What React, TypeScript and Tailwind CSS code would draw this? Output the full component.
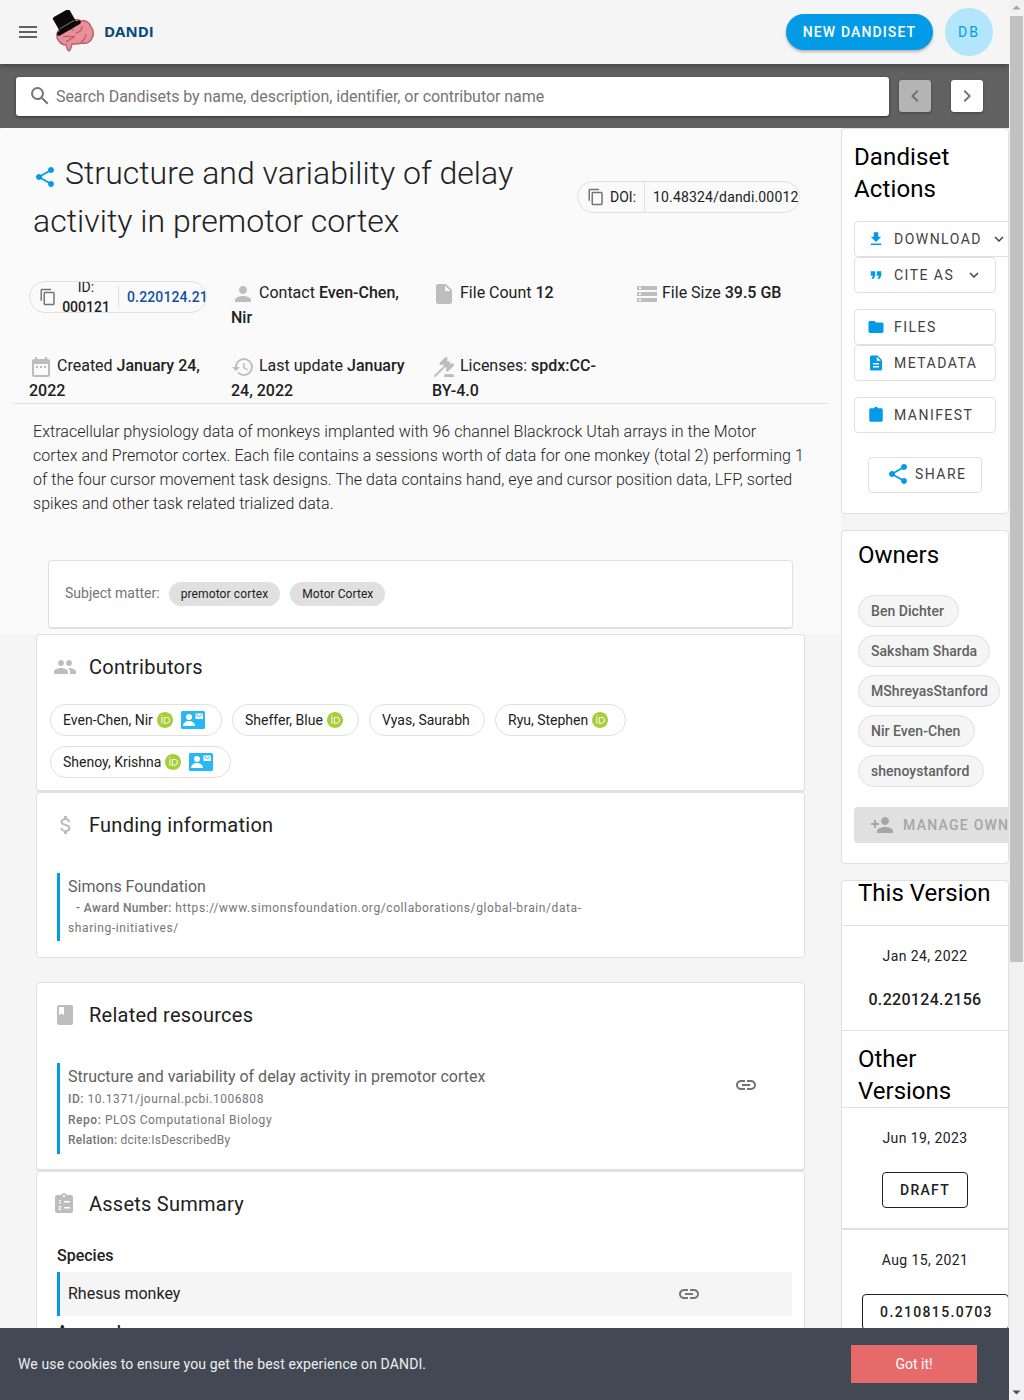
import React from "react";
import {
  MdMenu, MdSearch, MdChevronLeft, MdChevronRight, MdShare, MdContentCopy, MdPerson, MdInsertDriveFile,
  MdStorage, MdDateRange, MdHistory, MdFileDownload, MdFormatQuote, MdFolder, MdDescription,
  MdPeople, MdAttachMoney, MdBook, MdLink, MdPersonAdd, MdKeyboardArrowDown,
} from "react-icons/md";

function Logo() {
  return (
    <svg width="44" height="44" viewBox="0 0 44 44" className="shrink-0">
      <path d="M8 31c-3-3-3-8 0-11 1-5 6-6 10-7 3-4 9-4 12-2 5-1 9 2 10 6 3 3 3 8 1 11-1 4-6 6-10 5-3 1-7 1-10 1-1 3-1 6-3 7-2 0-2-4-3-6-2 0-5-1-7-4z" fill="#e88f98" stroke="#b8606c" strokeWidth="1.4" />
      <path d="M12 27c4-2 8 1 12-1m-9 6c3-3 7-3 9-6m1-3c4-1 6-4 6-7m-1 16c3-2 5-4 5-8M13 21c4-1 7-3 10-1" fill="none" stroke="#b8606c" strokeWidth="1.3" />
      <g transform="rotate(-30 15 14)">
        <rect x="6" y="2" width="19" height="17" rx="2" fill="#0a0a0a" />
        <rect x="2" y="17" width="27" height="4" rx="2" fill="#0a0a0a" />
        <path d="M7 15h17" stroke="#8a8a8a" strokeWidth="0.8" />
      </g>
    </svg>
  );
}

function Orcid() {
  return (
    <svg width="16" height="16" viewBox="0 0 256 256" className="shrink-0">
      <path d="M256 128c0 70.7-57.3 128-128 128S0 198.7 0 128 57.3 0 128 0s128 57.3 128 128z" fill="#a6ce39" />
      <path d="M86.3 186.2H70.9V79.1h15.4v107.1zM108.9 79.1h41.6c39.6 0 57 28.3 57 53.6 0 27.5-21.5 53.6-56.8 53.6h-41.8V79.1zm15.4 93.3h24.5c34.9 0 42.9-26.5 42.9-39.7C191.7 111.2 178 93 148 93h-23.7v79.4zM88.7 56.8c0 5.5-4.5 10.1-10.1 10.1s-10.1-4.6-10.1-10.1c0-5.6 4.5-10.1 10.1-10.1s10.1 4.6 10.1 10.1z" fill="#fff" />
    </svg>
  );
}

function ContactCard() {
  return (
    <svg width="24" height="18" viewBox="0 0 24 18" className="ml-[8px] shrink-0">
      <rect width="24" height="18" rx="1.5" fill="#29b6f6" />
      <circle cx="8" cy="6" r="3" fill="#fff" />
      <path d="M2 15c0-3 3-5 6-5s6 2 6 5z" fill="#fff" />
      <rect x="14.5" y="2.5" width="7.5" height="5.5" fill="#fff" />
      <path d="M15 3.500l3.200 2.200 3.300-2.200" fill="none" stroke="#29b6f6" strokeWidth="0.9" />
    </svg>
  );
}

function Gavel({ className }: { className?: string }) {
  return (
    <svg width="24" height="24" viewBox="0 0 24 24" className={className} fill="currentColor">
      <path d="M2.3 20.28L11.9 10.68L10.5 9.26L9.78 9.97C9.39 10.36 8.76 10.36 8.37 9.97L7.66 9.26C7.27 8.87 7.27 8.24 7.66 7.85L13.32 2.19C13.71 1.8 14.34 1.8 14.73 2.19L15.44 2.9C15.83 3.29 15.83 3.92 15.44 4.31L14.73 5L16.15 6.43C16.54 6.04 17.17 6.04 17.56 6.43C17.95 6.82 17.95 7.46 17.56 7.85L18.97 9.26L19.68 8.55C20.07 8.16 20.71 8.16 21.1 8.55L21.8 9.26C22.19 9.65 22.19 10.29 21.8 10.68L16.15 16.33C15.76 16.72 15.12 16.72 14.73 16.33L14.03 15.63C13.63 15.24 13.63 14.6 14.03 14.21L14.73 13.5L13.32 12.09L3.71 21.7C3.32 22.09 2.69 22.09 2.3 21.7C1.91 21.31 1.91 20.67 2.3 20.28M20 19A2 2 0 0 1 22 21V22H12V21A2 2 0 0 1 14 19H20Z" />
    </svg>
  );
}

function ClipboardList({ className }: { className?: string }) {
  return (
    <svg width="24" height="24" viewBox="0 0 24 24" className={className} fill="currentColor">
      <path d="M19 3h-4.200C14.400 1.800 13.300 1 12 1s-2.400.8-2.800 2H5c-1.100 0-2 .9-2 2v14c0 1.100.9 2 2 2h14c1.100 0 2-.9 2-2V5c0-1.100-.9-2-2-2zm-7 0c.6 0 1 .4 1 1s-.4 1-1 1-1-.4-1-1 .4-1 1-1zM7 8h1.500v4H7.500V9H7V8zm5 1h6v1.500h-6V9zM6.500 14h2.800v1l-1.700 2h1.700v1H6.500v-1l1.700-2H6.500v-1zm5.500 1h6v1.500h-6V15z" fillRule="evenodd" />
    </svg>
  );
}

function Clipboard({ className }: { className?: string }) {
  return (
    <svg width="18" height="18" viewBox="0 0 24 24" className={className} fill="currentColor">
      <path d="M19 3h-4.200C14.400 1.800 13.300 1 12 1s-2.400.8-2.800 2H5c-1.100 0-2 .9-2 2v14c0 1.100.9 2 2 2h14c1.100 0 2-.9 2-2V5c0-1.100-.9-2-2-2z" />
    </svg>
  );
}

function OutlineButton({ icon, label, width, mt, pad = "pl-[12px]", chevron }: { icon: React.ReactNode; label: string; width: string; mt?: string; pad?: string; chevron?: string }) {
  return (
    <div className={`flex h-9 items-center ${width} ${mt ?? ""} ${pad} shrink-0 rounded border border-[#e0e0e0] bg-white text-sm tracking-[0.105em] text-[#424242]`}>
      {icon}
      {label}
      {chevron && <MdKeyboardArrowDown size={18} className={`${chevron} shrink-0 text-[#424242]`} />}
    </div>
  );
}

function Info({ children, icon }: { children: React.ReactNode; icon: React.ReactNode }) {
  return (
    <div className="pr-[22px] text-base leading-6 text-[#212121]">
      {icon}
      {children}
    </div>
  );
}

function SectionTitle({ icon, title }: { icon: React.ReactNode; title: string }) {
  return (
    <div className="flex h-8 items-center">
      <div className="flex w-[52px] shrink-0 justify-start pl-4 text-[#bdbdbd]">{icon}</div>
      <div className="text-xl tracking-[0.0125em] text-[#212121]">{title}</div>
    </div>
  );
}

function Person({ name, orcid, contact, w }: { name: string; orcid?: boolean; contact?: boolean; w: string }) {
  return (
    <div className={`flex h-8 items-center rounded-full border border-[#e0e0e0] pl-3 ${w} text-sm text-[#212121]`}>
      <span>{name}</span>
      {orcid && <span className="ml-[4px]"><Orcid /></span>}
      {contact && <ContactCard />}
    </div>
  );
}

function OwnerChip({ name, w }: { name: string; w: string }) {
  return (
    <div className={`flex h-8 items-center rounded-full border border-[#e0e0e0] bg-[#f5f5f5] pl-3 ${w} text-sm font-medium tracking-[0.003em] text-[#616161]`}>
      {name}
    </div>
  );
}

export default function App() {
  return (
    <div className="h-[1400px] w-[1024px] overflow-hidden bg-[#f5f5f5] font-[Roboto,sans-serif]">
      <div className="w-[1009px]">
        <header className="relative z-10 flex h-16 items-center bg-[#f5f5f5] px-4 shadow-[0_2px_4px_-1px_rgba(0,0,0,0.2),0_4px_5px_rgba(0,0,0,0.14)]">
          <MdMenu size={24} className="text-[#616161]" />
          <div className="ml-[11px]"><Logo /></div>
          <span className="ml-[9px] pb-[2px] font-['Open_Sans',sans-serif] text-[15px] font-bold text-[#044a7d]">DANDI</span>
          <div className="ml-auto flex items-center">
            <div className="flex h-9 w-[147px] items-center justify-center rounded-full bg-[#039be5] text-sm font-medium tracking-[0.08em] text-white shadow-[0_2px_3px_rgba(0,0,0,0.25)]">NEW DANDISET</div>
            <div className="ml-3 flex h-12 w-12 items-center justify-center rounded-full bg-[#b3e5fc] text-sm tracking-[0.14em] text-[#039be5]">DB</div>
          </div>
        </header>

        <div className="flex h-16 items-center bg-[#616161] pl-4">
          <div className="flex h-[39px] w-[873px] items-center rounded-[3px] bg-white pl-3 shadow-[0_1px_3px_rgba(0,0,0,0.5)]">
            <MdSearch size={24} className="text-[#757575]" />
            <span className="ml-[4px] pt-[1px] text-base tracking-[-0.06px] text-[#757575]">Search Dandisets by name, description, identifier, or contributor name</span>
          </div>
          <div className="ml-[10px] flex h-8 w-8 items-center justify-center rounded-[3px] bg-[#b4b4b4] text-[#6f6f6f] shadow-[0_1px_3px_rgba(0,0,0,0.3)]"><MdChevronLeft size={24} /></div>
          <div className="ml-5 flex h-8 w-8 items-center justify-center rounded-[3px] bg-white text-[#757575] shadow-[0_1px_3px_rgba(0,0,0,0.3)]"><MdChevronRight size={24} /></div>
        </div>

        <div className="flex items-start">
          <main className="w-[841px] shrink-0">
            <section className="h-[506px] rounded-t bg-[#fafafa] pt-[21px]">
              <div className="flex items-center pl-[33px]">
                <h1 className="w-[520px] shrink-0 text-[32px] leading-12 font-light tracking-[0.03px] text-[#212121]">
                  <MdShare size={24} className="mr-[8px] inline-block align-[-5px] text-[#039be5]" />
                  Structure and variability of delay activity in premotor cortex
                </h1>
                <div className="ml-[24px] flex h-8 w-[223px] items-center overflow-hidden rounded-full border border-[#e0e0e0] text-sm whitespace-nowrap text-[#212121]">
                  <MdContentCopy size={18} className="ml-[9px] shrink-0 text-[#757575]" />
                  <span className="ml-[5px]">DOI:</span>
                  <span className="ml-2 h-full w-px shrink-0 bg-[#e0e0e0]"></span>
                  <span className="ml-2 tracking-[0.012em]">10.48324/dandi.000121/0.220124.2156</span>
                </div>
              </div>

              <div className="mt-[36px] ml-[29px] grid grid-cols-[202px_201px_203px_172px] gap-y-[24px]">
                <div className="pr-[24px]">
                  <div className="flex h-8 items-center overflow-hidden rounded-full border border-[#e0e0e0] text-sm whitespace-nowrap text-[#212121]">
                    <MdContentCopy size={18} className="ml-[9px] shrink-0 text-[#757575]" />
                    <span className="ml-[4px] flex w-[50px] shrink-0 flex-col items-center leading-5 font-normal"><span>ID:</span><span className="font-medium">000121</span></span>
                    <span className="ml-[7px] h-[22px] w-px shrink-0 bg-[#e0e0e0]"></span>
                    <span className="ml-2 font-medium tracking-[0.01em] text-[#1150a8]">0.220124.2156</span>
                  </div>
                </div>
                <Info icon={<MdPerson size={24} className="mr-[4px] inline-block align-middle text-[#bdbdbd]" />}>Contact <b className="font-medium">Even-Chen, Nir</b></Info>
                <Info icon={<MdInsertDriveFile size={24} className="mr-[4px] inline-block align-middle text-[#bdbdbd]" />}>File Count <b className="font-medium">12</b></Info>
                <Info icon={<MdStorage size={24} className="mr-[3px] inline-block align-middle text-[#bdbdbd]" />}>File Size <b className="font-medium">39.5 GB</b></Info>
                <Info icon={<MdDateRange size={24} className="mr-[4px] inline-block align-middle text-[#bdbdbd]" />}>Created <b className="font-medium">January 24, 2022</b></Info>
                <Info icon={<MdHistory size={24} className="mr-[4px] inline-block align-middle text-[#bdbdbd]" />}>Last update <b className="font-medium">January 24, 2022</b></Info>
                <Info icon={<Gavel className="mr-[4px] inline-block align-middle text-[#bdbdbd]" />}>Licenses: <b className="font-medium">spdx:CC-BY-4.0</b></Info>
              </div>

              <div className="mx-[13px] h-px bg-[#e0e0e0]"></div>

              <p className="mt-4 ml-[33px] w-[780px] text-base leading-6 font-light tracking-[0.05px] text-[#212121]">
                Extracellular physiology data of monkeys implanted with 96 channel Blackrock Utah arrays in the Motor<br />
                cortex and Premotor cortex. Each file contains a sessions worth of data for one monkey (total 2) performing 1<br />
                of the four cursor movement task designs. The data contains hand, eye and cursor position data, LFP, sorted<br />
                spikes and other task related trialized data.
              </p>

              <div className="mt-[44px] ml-[48px] flex h-[69px] w-[745px] items-center rounded border border-b-2 border-[#e0e0e0] bg-white pl-4 text-sm text-[#757575]">
                <span className="pb-[2px]">Subject matter:</span>
                <span className="ml-[9px] flex h-6 items-center rounded-full bg-[#e0e0e0] px-3 text-xs tracking-[0.01em] text-[#212121]">premotor cortex</span>
                <span className="ml-[10px] flex h-6 items-center rounded-full bg-[#e0e0e0] px-3 text-xs tracking-[0.005em] text-[#212121]">Motor Cortex</span>
              </div>
            </section>

            <div className="ml-9 w-[769px]">
              <section className="h-[158px] rounded border border-b-2 border-[#e0e0e0] bg-white pt-4">
                <SectionTitle icon={<MdPeople size={24} />} title="Contributors" />
                <div className="mt-[21px] flex flex-wrap gap-[10px] pl-[13px]">
                  <Person name="Even-Chen, Nir" orcid contact w="w-[172px]" />
                  <Person name="Sheffer, Blue" orcid w="w-[127px]" />
                  <Person name="Vyas, Saurabh" w="w-[116px]" />
                  <Person name="Ryu, Stephen" orcid w="w-[131px]" />
                  <Person name="Shenoy, Krishna" orcid contact w="w-[181px]" />
                </div>
              </section>

              <section className="h-[166px] rounded border border-[#e0e0e0] bg-white pt-4">
                <SectionTitle icon={<MdAttachMoney size={24} className="ml-[1px]" />} title="Funding information" />
                <div className="mt-[32px] ml-[20px] h-[68px] w-[530px] border-l-[3px] border-[#039be5] pl-2">
                  <div className="h-[25px] text-base leading-[28px] text-[#616161]">Simons Foundation</div>
                  <div className="text-xs leading-5 tracking-[0.05em] text-[#757575]">
                    <span className="ml-2 font-medium tracking-[0.03em]">- Award Number:</span> https://www.simonsfoundation.org/collaborations/global-brain/data-sharing-initiatives/
                  </div>
                </div>
              </section>

              <section className="mt-6 h-[189px] rounded border border-b-2 border-[#e0e0e0] bg-white pt-4">
                <SectionTitle icon={<MdBook size={24} />} title="Related resources" />
                <div className="relative mt-[32px] ml-[20px] h-[91px] border-l-[3px] border-[#039be5] pl-2">
                  <div className="h-[26px] text-base leading-[28px] text-[#616161]">Structure and variability of delay activity in premotor cortex</div>
                  <div className="text-xs leading-[20.6px] tracking-[0.045em] text-[#757575]"><b className="font-medium">ID:</b> 10.1371/journal.pcbi.1006808</div>
                  <div className="text-xs leading-[20.6px] tracking-[0.045em] text-[#757575]"><b className="font-medium">Repo:</b> PLOS Computational Biology</div>
                  <div className="text-xs leading-[20.6px] tracking-[0.02em] text-[#757575]"><b className="font-medium">Relation:</b> dcite:IsDescribedBy</div>
                  <MdLink size={24} className="absolute top-[10px] left-[674px] text-[#757575]" />
                </div>
              </section>

              <section className="h-[400px] rounded border border-[#e0e0e0] bg-white pt-4">
                <SectionTitle icon={<ClipboardList className="-ml-[1px]" />} title="Assets Summary" />
                <div className="mt-[24px] ml-[20px] text-base leading-6 font-medium text-[#212121]">Species</div>
                <div className="mt-[4px] ml-[20px] flex h-11 w-[735px] items-center border-l-[3px] border-[#039be5] bg-[#f5f5f5] pl-2 text-base text-[#212121]">
                  <span>Rhesus monkey</span>
                  <MdLink size={24} className="ml-[497px] text-[#757575]" />
                </div>
                <div className="mt-[4px] ml-[20px] text-base leading-6 font-medium text-[#212121]">Approach</div>
              </section>
            </div>
          </main>

          <aside className="w-[168px] shrink-0">
            <section className="h-[386px] overflow-hidden rounded border border-[#e0e0e0] bg-white pt-[12px] pl-[12px]">
              <h2 className="text-2xl leading-8 tracking-[0.005em] text-black">Dandiset Actions</h2>
              <OutlineButton width="w-[160px]" mt="mt-4" chevron="ml-[8px]" icon={<MdFileDownload size={18} className="mr-[9px] shrink-0 text-[#039be5]" />} label="DOWNLOAD" />
              <OutlineButton width="w-[142px]" chevron="ml-[11px]" icon={<MdFormatQuote size={18} className="mr-[9px] shrink-0 text-[#039be5]" />} label="CITE AS" />
              <OutlineButton width="w-[142px]" mt="mt-4" icon={<MdFolder size={18} className="mr-[9px] shrink-0 text-[#039be5]" />} label="FILES" />
              <OutlineButton width="w-[142px]" icon={<MdDescription size={18} className="mr-[9px] shrink-0 text-[#039be5]" />} label="METADATA" />
              <OutlineButton width="w-[142px]" mt="mt-4" icon={<Clipboard className="mr-[9px] shrink-0 text-[#039be5]" />} label="MANIFEST" />
              <div className="mt-6 ml-[14px]">
                <OutlineButton width="w-[114px]" pad="pl-[17px] pb-[2px]" icon={<MdShare size={24} className="mr-[5px] shrink-0 text-[#039be5]" />} label="SHARE" />
              </div>
            </section>

            <section className="mt-4 h-[334px] overflow-hidden rounded border border-[#e0e0e0] bg-white pt-[8px]">
              <h2 className="pl-4 text-2xl leading-8 text-black">Owners</h2>
              <div className="mt-[24px] flex flex-col gap-2 pl-4">
                <OwnerChip name="Ben Dichter" w="w-[101px]" />
                <OwnerChip name="Saksham Sharda" w="w-[132px]" />
                <OwnerChip name="MShreyasStanford" w="w-[142px]" />
                <OwnerChip name="Nir Even-Chen" w="w-[117px]" />
                <OwnerChip name="shenoystanford" w="w-[126px]" />
              </div>
              <div className="mt-5 ml-3 flex h-9 w-[200px] items-center rounded bg-[#e0e0e0] pl-4 text-sm font-medium tracking-[0.09em] whitespace-nowrap text-[#a6a6a6]">
                <MdPersonAdd size={24} className="mr-[9px] shrink-0" />
                MANAGE OWNERS
              </div>
            </section>

            <section className="mt-4 h-[600px] overflow-hidden rounded border border-[#e0e0e0] bg-white">
              <h2 className="-mt-[4px] pl-4 text-2xl leading-8 text-black">This Version</h2>
              <div className="mt-[16px] h-[105px] border-t border-[#e0e0e0] text-center">
                <div className="pt-[20px] text-sm leading-5 tracking-[0.03em] text-[#212121]">Jan 24, 2022</div>
                <div className="mt-[24px] text-base leading-5 font-medium tracking-[0.02em] text-[#212121]">0.220124.2156</div>
              </div>
              <div className="border-t border-[#e0e0e0] pt-[12px]">
                <h2 className="pl-4 text-2xl leading-8 text-black">Other Versions</h2>
              </div>
              <div className="h-[121px] border-t border-[#e0e0e0] text-center">
                <div className="pt-[20px] text-sm leading-5 tracking-[0.03em] text-[#212121]">Jun 19, 2023</div>
                <div className="mx-auto mt-[24px] flex h-9 w-[86px] items-center justify-center rounded border border-[#212121] text-sm font-medium tracking-[0.09em] text-[#212121]">DRAFT</div>
              </div>
              <div className="border-t-2 border-[#e0e0e0] text-center">
                <div className="pt-[20px] text-sm leading-5 tracking-[0.03em] text-[#212121]">Aug 15, 2021</div>
                <div className="mt-[24px] ml-5 flex h-9 w-[147px] items-center justify-center rounded border border-[#212121] pl-[2px] text-sm font-medium tracking-[0.096em] text-[#212121]">0.210815.0703</div>
              </div>
            </section>
          </aside>
        </div>
      </div>

      <div className="fixed bottom-0 left-0 z-20 flex h-[72px] w-[1009px] items-center bg-[#424954] pl-[18px]">
        <span className="text-sm tracking-[0.009em] text-[#eeeeee]">We use cookies to ensure you get the best experience on DANDI.</span>
        <div className="absolute top-[17px] left-[851px] flex h-[38px] w-[126px] items-center justify-center bg-[#e76a6a] text-sm text-white">Got it!</div>
      </div>

      <div className="fixed top-0 right-0 z-30 flex h-[1400px] w-[15px] flex-col items-center bg-[#f1f1f1]">
        <svg width="9" height="16" viewBox="0 0 9 16" className="shrink-0"><path d="M0.500 9.500L4.500 5.500L8.500 9.500z" fill="#a3a3a3" /></svg>
        <div className="h-[946px] w-[13px] bg-[#c1c1c1]"></div>
        <svg width="9" height="16" viewBox="0 0 9 16" className="mt-auto shrink-0"><path d="M0.500 6.500L4.500 10.500L8.500 6.500z" fill="#505050" /></svg>
      </div>
    </div>
  );
}
